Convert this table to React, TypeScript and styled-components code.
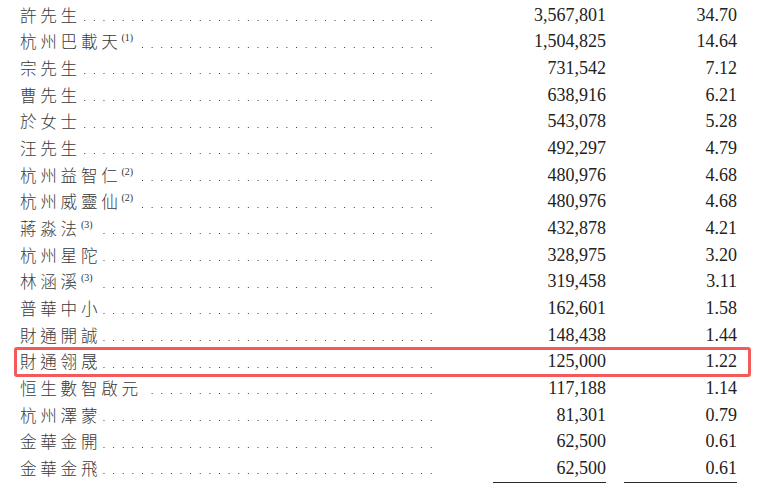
import React from "react";
import styled, { createGlobalStyle } from "styled-components";

const Global = createGlobalStyle`
  html, body { margin: 0; padding: 0; background: #ffffff; }
  body { width: 759px; height: 496px; overflow: hidden; }
`;

const ROW_H = 26.68;

const Table = styled.div`
  padding: 1.6px 0 0 20px;
  display: flex;
  flex-direction: column;
`;

const Row = styled.div<{ $hl?: boolean }>`
  display: grid;
  grid-template-columns: 414px 172px 131px;
  height: ${ROW_H}px;
  align-items: stretch;

  ${(p) =>
    p.$hl &&
    `
    position: relative;
    z-index: 2;
    &::after {
      content: "";
      position: absolute;
      left: -6px;
      right: 8px;
      top: -1.4px;
      bottom: -1.6px;
      border: 3.5px solid #f45a5a;
      border-radius: 3px;
      pointer-events: none;
    }
  `}
`;

const Leader = styled.div`
  display: flex;
  align-items: flex-start;
  background-image: linear-gradient(to right, #3a3a3a 1.4px, transparent 1.4px);
  background-size: 9.63px 1.4px;
  background-repeat: repeat-x;
  background-position: 6.5px 18.4px;
`;

const Label = styled.span`
  background: #ffffff;
  padding-right: 2px;
  font-family: "Noto Sans CJK TC", "Noto Sans CJK SC", sans-serif;
  font-size: 16.6px;
  font-weight: 300;
  letter-spacing: 3.7px;
  line-height: ${ROW_H}px;
  color: #3a3a3a;
  white-space: nowrap;
`;

const Sup = styled.span`
  font-family: "Liberation Serif", "Times New Roman", serif;
  font-size: 10px;
  font-weight: 400;
  letter-spacing: 0;
  line-height: 1;
  vertical-align: 7.5px;
  color: #333333;
`;

const Num = styled.div`
  font-family: "Liberation Serif", "Times New Roman", serif;
  font-size: 18px;
  line-height: ${ROW_H}px;
  text-align: right;
  color: #222222;
  white-space: nowrap;
`;

const RuleRow = styled.div`
  display: grid;
  grid-template-columns: 414px 172px 131px;
  height: 2px;
`;

const Rule = styled.div`
  justify-self: end;
  width: 113px;
  border-top: 1.2px solid #2a2a2a;
`;

type Item = { name: string; sup?: string; shares: string; pct: string; hl?: boolean };

const data: Item[] = [
  { name: "許先生", shares: "3,567,801", pct: "34.70" },
  { name: "杭州巴載天", sup: "(1)", shares: "1,504,825", pct: "14.64" },
  { name: "宗先生", shares: "731,542", pct: "7.12" },
  { name: "曹先生", shares: "638,916", pct: "6.21" },
  { name: "於女士", shares: "543,078", pct: "5.28" },
  { name: "汪先生", shares: "492,297", pct: "4.79" },
  { name: "杭州益智仁", sup: "(2)", shares: "480,976", pct: "4.68" },
  { name: "杭州威靈仙", sup: "(2)", shares: "480,976", pct: "4.68" },
  { name: "蔣淼法", sup: "(3)", shares: "432,878", pct: "4.21" },
  { name: "杭州星陀", shares: "328,975", pct: "3.20" },
  { name: "林涵溪", sup: "(3)", shares: "319,458", pct: "3.11" },
  { name: "普華中小", shares: "162,601", pct: "1.58" },
  { name: "財通開誠", shares: "148,438", pct: "1.44" },
  { name: "財通翎晟", shares: "125,000", pct: "1.22", hl: true },
  { name: "恒生數智啟元", shares: "117,188", pct: "1.14" },
  { name: "杭州澤蒙", shares: "81,301", pct: "0.79" },
  { name: "金華金開", shares: "62,500", pct: "0.61" },
  { name: "金華金飛", shares: "62,500", pct: "0.61" },
];

export default function App() {
  return (
    <>
      <Global />
      <Table>
        {data.map((d, i) => (
          <Row key={i} $hl={d.hl}>
            <Leader>
              <Label>
                {d.name}
                {d.sup && <Sup>{d.sup}</Sup>}
              </Label>
            </Leader>
            <Num>{d.shares}</Num>
            <Num>{d.pct}</Num>
          </Row>
        ))}
        <RuleRow>
          <div />
          <Rule />
          <Rule />
        </RuleRow>
      </Table>
    </>
  );
}
